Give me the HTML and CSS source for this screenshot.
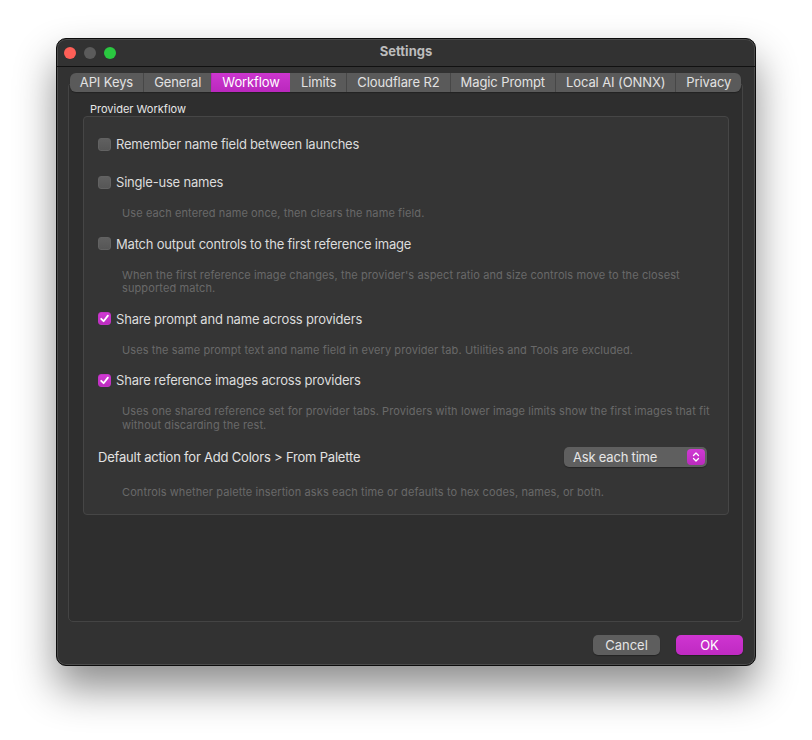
FILE: index.html
```html
<!DOCTYPE html>
<html lang="en">
<head>
    <meta charset="UTF-8">
    <title>Settings</title>
    <link rel="stylesheet" href="styles.css">
</head>
<body>

<div class="window">
    <div class="titlebar">
        <div class="lights">
            <span class="light red"></span>
            <span class="light gray"></span>
            <span class="light green"></span>
        </div>
        <div class="title">Settings</div>
        <div></div>
    </div>

    <div class="content">
        <div class="tabs">
            <span class="tab">API Keys</span>
            <span class="tab">General</span>
            <span class="tab active">Workflow</span>
            <span class="tab">Limits</span>
            <span class="tab">Cloudflare R2</span>
            <span class="tab">Magic Prompt</span>
            <span class="tab">Local AI (ONNX)</span>
            <span class="tab">Privacy</span>
        </div>

        <div class="pane">
            <div class="group-title">Provider Workflow</div>
            <div class="group">
                <label class="check first"><span class="box"></span>Remember name field between launches</label>

                <label class="check"><span class="box"></span>Single-use names</label>
                <p class="desc">Use each entered name once, then clears the name field.</p>

                <label class="check"><span class="box"></span>Match output controls to the first reference image</label>
                <p class="desc">When the first reference image changes, the provider's aspect ratio and size controls move to the closest supported match.</p>

                <label class="check"><span class="box checked"><svg viewBox="0 0 13 13"><path d="M3.2 6.8 L5.6 9.2 L9.9 3.6" /></svg></span>Share prompt and name across providers</label>
                <p class="desc">Uses the same prompt text and name field in every provider tab. Utilities and Tools are excluded.</p>

                <label class="check"><span class="box checked"><svg viewBox="0 0 13 13"><path d="M3.2 6.8 L5.6 9.2 L9.9 3.6" /></svg></span>Share reference images across providers</label>
                <p class="desc">Uses one shared reference set for provider tabs. Providers with lower image limits show the first images that fit without discarding the rest.</p>

                <div class="select-row">
                    <span>Default action for Add Colors &gt; From Palette</span>
                    <div class="select">
                        <span>Ask each time</span>
                        <span class="arrows"><svg viewBox="0 0 18 16"><path d="M6.5 6.5 L9 4 L11.5 6.5 M6.5 9.5 L9 12 L11.5 9.5" /></svg></span>
                    </div>
                </div>
                <p class="desc last">Controls whether palette insertion asks each time or defaults to hex codes, names, or both.</p>
            </div>
        </div>

        <div class="footer">
            <button class="btn cancel-btn">Cancel</button>
            <button class="btn ok-btn">OK</button>
        </div>
    </div>
</div>

</body>
</html>
```

FILE: styles.css
```css
body {
    margin: 0;
    padding-bottom: 74px;
    background: #ffffff;
    font-family: Inter, "Liberation Sans", sans-serif;
    color: #dedede;
}
.window {
    box-sizing: border-box;
    width: 700px;
    height: 628px;
    margin: 38px 0 0 56px;
    background: #323232;
    border: 1px solid #0c0c0c;
    border-radius: 10px;
    box-shadow: inset 0 0 0 1px #4c4c4c, 0 22px 40px rgba(0,0,0,0.45);
    display: flex;
    flex-direction: column;
}
.titlebar {
    height: 27px;
    border-bottom: 1px solid #111;
    display: grid;
    grid-template-columns: 1fr auto 1fr;
    align-items: center;
}
.lights {
    display: flex;
    gap: 8px;
    padding-left: 7px;
}
.light {
    width: 12px;
    height: 12px;
    border-radius: 50%;
}
.red { background: #fe5f57; }
.gray { background: #5b5b5b; }
.green { background: #2ac840; }
.title {
    font-size: 13px;
    font-weight: 700;
    color: #bcbcbc;
    margin-top: -3px;
}
.content {
    flex: 1;
    padding: 6px 12px 10px 11px;
    display: flex;
    flex-direction: column;
}
.tabs {
    align-self: center;
    display: flex;
    height: 19px;
    background: #5a5a5a;
    border-radius: 6px;
    overflow: hidden;
    position: relative;
    z-index: 1;
    margin-bottom: -10px;
    box-shadow: 0 1px 1px rgba(0,0,0,0.25);
}
.tab {
    padding: 0 10px;
    font-size: 13px;
    line-height: 19px;
    letter-spacing: -0.1px;
    color: #e2e2e2;
    border-left: 1px solid #474747;
}
.tab:first-child {
    border-left: none;
}
.tab.active {
    background: linear-gradient(#cc36cf, #ba28bd);
    color: #fff;
    border-left-color: #ba28bd;
}
.tab.active + .tab {
    border-left-color: transparent;
}
.pane {
    flex: 1;
    border: 1px solid #444;
    border-radius: 5px;
    background: #2e2e2e;
    padding: 19px 13px 0 14px;
}
.group-title {
    font-size: 11px;
    line-height: 14px;
    margin-left: 7px;
    color: #e6e6e6;
}
.group {
    height: 399px;
    box-sizing: border-box;
    border: 1px solid #464646;
    border-radius: 4px;
    background: #353535;
    padding: 17px 14px 15px 14px;
    display: flex;
    flex-direction: column;
    gap: 14px;
}
.check {
    display: flex;
    align-items: center;
    gap: 5px;
    height: 20px;
    font-size: 13px;
    letter-spacing: -0.2px;
    color: #dcdcdc;
}
.check.first {
    margin-bottom: 4px;
}
.box {
    width: 13px;
    height: 13px;
    box-sizing: border-box;
    border-radius: 3px;
    background: linear-gradient(#606060, #565656);
    border: 1px solid #626262;
}
.box.checked {
    background: linear-gradient(#d03ad3, #bd2cc0);
    border-color: #c233c5;
}
.box svg {
    display: block;
    width: 13px;
    height: 13px;
    margin: -1px;
    fill: none;
    stroke: #fff;
    stroke-width: 1.8;
    stroke-linecap: round;
    stroke-linejoin: round;
}
.desc {
    margin: 1px 0 -1px 24px;
    font-size: 11px;
    line-height: 13.5px;
    letter-spacing: 0.1px;
    color: #696969;
}
.desc.last {
    margin-top: 5px;
}
.select-row {
    display: flex;
    justify-content: space-between;
    align-items: center;
    height: 20px;
    margin: 2px 7px 0 0;
    font-size: 13px;
    letter-spacing: -0.2px;
    color: #e2e2e2;
}
.select {
    width: 143px;
    height: 20px;
    box-sizing: border-box;
    display: flex;
    justify-content: space-between;
    align-items: center;
    padding: 0 2px 0 9px;
    border-radius: 5px;
    background: #5f5f5f;
    box-shadow: 0 1px 1px rgba(0,0,0,0.3);
    color: #e6e6e6;
}
.arrows {
    width: 18px;
    height: 16px;
    border-radius: 4px;
    background: linear-gradient(#d03ad3, #bb2bbe);
}
.arrows svg {
    display: block;
    width: 18px;
    height: 16px;
    fill: none;
    stroke: #fff;
    stroke-width: 1.3;
    stroke-linecap: round;
    stroke-linejoin: round;
}
.footer {
    display: flex;
    justify-content: flex-end;
    gap: 16px;
    margin-top: 13px;
}
.btn {
    width: 67px;
    height: 20px;
    border: none;
    border-radius: 5px;
    font-family: inherit;
    font-size: 13px;
    padding: 0;
    box-shadow: 0 1px 1px rgba(0,0,0,0.3);
}
.cancel-btn {
    background: #5e5e5e;
    color: #e4e4e4;
}
.ok-btn {
    background: linear-gradient(#cf35d1, #bf2ac2);
    color: #fff;
}
```
